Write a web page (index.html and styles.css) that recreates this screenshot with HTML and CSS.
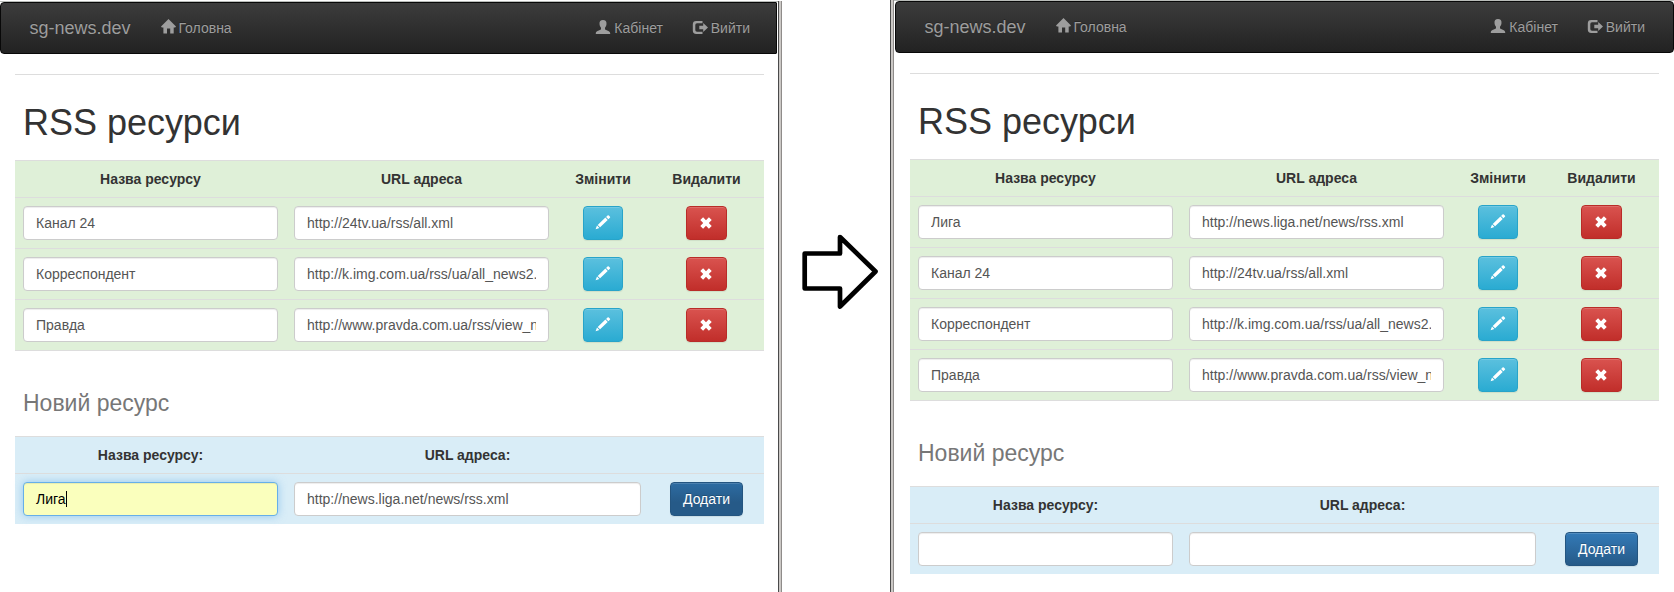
FILE: index.html
```
<!DOCTYPE html>
<html lang="uk">
<head>
<meta charset="utf-8">
<title>RSS ресурси</title>
<link rel="stylesheet" href="styles.css">
</head>
<body>
<svg class="sprite" width="0" height="0">
  <defs>
    <symbol id="home" viewBox="0 0 15 15"><path d="M7.500 0 15 7.600 14.200 8.400H12.700V14.500H9.200V9.400H6V14.500H2.400V8.400H.8L0 7.600Z"/></symbol>
    <symbol id="user" viewBox="0 0 14 14"><path d="M7 0C9.500 0 10.700 1.600 10.500 4 10.400 5.700 9.600 7 9 7.700V9.300C10 10.400 14.200 11 14.200 13.200V14H-.2V13.200C-.2 11 4 10.400 5 9.300V7.700C4.400 7 3.600 5.700 3.500 4 3.300 1.600 4.500 0 7 0Z"/></symbol>
    <symbol id="logout" viewBox="0 0 14 14"><path d="M9.500 1H3.200Q-.2 1 -.2 4.400V10.600Q-.2 14 3.200 14H9.500V11.700H4Q2.300 11.700 2.300 10V5Q2.300 3.300 4 3.300H9.500ZM10.200 3 15 7.500 10.200 12V9.300H6.300V5.700H10.200Z"/></symbol>
    <symbol id="pencil" viewBox="0 0 14 14"><path d="M-.4 14.200 1 10.500 3.400 12.900ZM1.700 9.900 9.400 2.600 11.700 4.900 4.100 12.200ZM10.100 1.900 11.500.5Q12.200-.1 12.800.5L14 1.700Q14.500 2.200 13.900 2.800L12.400 4.200Z"/></symbol>
    <symbol id="remove" viewBox="0 0 12 12"><path d="M3.100.3 6 3.200 8.900.3 11.700 3.100 8.800 6 11.700 8.900 8.900 11.700 6 8.800 3.100 11.700.3 8.900 3.200 6 .3 3.100Z"/></symbol>
  </defs>
</svg>
<main class="stage">
  <section class="window window-before">
    <div class="page">
      <nav class="navbar">
        <span class="brand">sg-news.dev</span>
        <a class="nav-link"><svg class="icon icon-home"><use href="#home"/></svg> Головна</a>
        <span class="spacer"></span>
        <a class="nav-link"><svg class="icon"><use href="#user"/></svg> Кабінет</a>
        <a class="nav-link"><svg class="icon"><use href="#logout"/></svg> Вийти</a>
      </nav>
      <div class="content">
        <h1>RSS ресурси</h1>
        <div class="table resources">
          <div class="row head"><b>Назва ресурсу</b><b>URL адреса</b><b>Змінити</b><b>Видалити</b></div>
          <div class="row"><input value="Канал 24"><input value="http://24tv.ua/rss/all.xml"><button class="btn edit"><svg class="icon"><use href="#pencil"/></svg></button><button class="btn delete"><svg class="icon-x"><use href="#remove"/></svg></button></div>
          <div class="row"><input value="Корреспондент"><input value="http://k.img.com.ua/rss/ua/all_news2.xml"><button class="btn edit"><svg class="icon"><use href="#pencil"/></svg></button><button class="btn delete"><svg class="icon-x"><use href="#remove"/></svg></button></div>
          <div class="row"><input value="Правда"><input value="http://www.pravda.com.ua/rss/view_news/"><button class="btn edit"><svg class="icon"><use href="#pencil"/></svg></button><button class="btn delete"><svg class="icon-x"><use href="#remove"/></svg></button></div>
        </div>
        <h2>Новий ресурс</h2>
        <div class="table create">
          <div class="row head"><b>Назва ресурсу:</b><b>URL адреса:</b></div>
          <div class="row"><div class="field-focused">Лига<i class="caret"></i></div><input value="http://news.liga.net/news/rss.xml"><button class="btn add add-active">Додати</button></div>
        </div>
      </div>
    </div>
    <div class="edge"></div>
  </section>
  <div class="between">
    <svg class="arrow" viewBox="0 0 80 80"><path d="M4.700 21.500H40V5L75.500 39.500 40 74.500V56.500H4.700Z"/></svg>
  </div>
  <section class="window window-after">
    <div class="edge"></div>
    <div class="page">
      <nav class="navbar">
        <span class="brand">sg-news.dev</span>
        <a class="nav-link"><svg class="icon icon-home"><use href="#home"/></svg> Головна</a>
        <span class="spacer"></span>
        <a class="nav-link"><svg class="icon"><use href="#user"/></svg> Кабінет</a>
        <a class="nav-link"><svg class="icon"><use href="#logout"/></svg> Вийти</a>
      </nav>
      <div class="content">
        <h1>RSS ресурси</h1>
        <div class="table resources">
          <div class="row head"><b>Назва ресурсу</b><b>URL адреса</b><b>Змінити</b><b>Видалити</b></div>
          <div class="row"><input value="Лига"><input value="http://news.liga.net/news/rss.xml"><button class="btn edit"><svg class="icon"><use href="#pencil"/></svg></button><button class="btn delete"><svg class="icon-x"><use href="#remove"/></svg></button></div>
          <div class="row"><input value="Канал 24"><input value="http://24tv.ua/rss/all.xml"><button class="btn edit"><svg class="icon"><use href="#pencil"/></svg></button><button class="btn delete"><svg class="icon-x"><use href="#remove"/></svg></button></div>
          <div class="row"><input value="Корреспондент"><input value="http://k.img.com.ua/rss/ua/all_news2.xml"><button class="btn edit"><svg class="icon"><use href="#pencil"/></svg></button><button class="btn delete"><svg class="icon-x"><use href="#remove"/></svg></button></div>
          <div class="row"><input value="Правда"><input value="http://www.pravda.com.ua/rss/view_news/"><button class="btn edit"><svg class="icon"><use href="#pencil"/></svg></button><button class="btn delete"><svg class="icon-x"><use href="#remove"/></svg></button></div>
        </div>
        <h2>Новий ресурс</h2>
        <div class="table create">
          <div class="row head"><b>Назва ресурсу:</b><b>URL адреса:</b></div>
          <div class="row"><input><input><button class="btn add">Додати</button></div>
        </div>
      </div>
    </div>
  </section>
</main>
</body>
</html>
```
FILE: styles.css
```
* { box-sizing: border-box; }
body {
  margin: 0;
  background: #fff;
  color: #333;
  font: 14px/20px "Liberation Sans", Arial, sans-serif;
  overflow: hidden;
}
.sprite { display: block; height: 0; }
.stage {
  display: grid;
  grid-template-columns: 782px 108px 784px;
  height: 592px;
  overflow: hidden;
}
.window { display: flex; height: 592px; overflow: hidden; }
.window-before { padding-top: 1px; }
.page { flex: 1; min-width: 0; border-top: 1px solid #b9bcb9; overflow: hidden; }
.window-after .page { padding-left: 1px; }
.edge {
  flex: none;
  width: 4px;
  background: linear-gradient(90deg, #4a4a4a 1px, #cbc8c5 1px 3px, #8f8c8a 3px);
}
.navbar {
  display: flex;
  align-items: center;
  width: 779px;
  height: 52px;
  padding: 0 13px 0 13.5px;
  border: 1px solid #080808;
  border-radius: 4px;
  background: linear-gradient(#3c3c3c, #222);
  color: #9d9d9d;
  text-shadow: 0 -1px 0 rgba(0, 0, 0, .25);
}
.window-before .navbar { width: 777px; padding-right: 11px; border-radius: 4px 1px 1px 4px; }
.brand { padding: 0 15px; font-size: 18px; }
.nav-link { padding: 0 15px; white-space: nowrap; }
.spacer { flex: 1; }
.icon { width: 14px; height: 14px; vertical-align: -1px; fill: currentColor; overflow: visible; }
.icon use { overflow: visible; }
.icon symbol, symbol { overflow: visible; }
.icon-home { width: 15px; height: 15px; margin-right: -1px; }
.icon-x { width: 12px; height: 12px; margin: 0 1px 1px 0; fill: currentColor; }
.edit .icon { margin-bottom: 2px; }
.content {
  width: 749px;
  margin: 20px 0 0 15px;
  border-top: 1px solid #ddd;
}
h1 { margin: 28px 8px 18px; font-size: 36px; font-weight: 400; line-height: 39px; }
h2 { margin: 39px 8px 20px; font-size: 23px; font-weight: 400; line-height: 26px; color: #777; }
.row {
  display: grid;
  grid-template-columns: 271px 271px 92px 115px;
  align-items: center;
  justify-items: center;
  height: 51px;
  border-top: 1px solid #ddd;
}
.create .row { grid-template-columns: 271px 363px 115px; }
.row.head { height: 37px; }
.resources { background: #dff0d8; border-bottom: 1px solid #ddd; }
.create { background: #d9edf7; }
input, .field-focused {
  display: block;
  width: calc(100% - 16px);
  height: 34px;
  padding: 6px 12px;
  border: 1px solid #ccc;
  border-radius: 4px;
  background: #fff;
  box-shadow: inset 0 1px 1px rgba(0, 0, 0, .075);
  color: #555;
  font: inherit;
}
.field-focused {
  display: flex;
  align-items: center;
  border-color: #66afe9;
  background: #faffbd;
  box-shadow: inset 0 1px 1px rgba(0, 0, 0, .075), 0 0 8px rgba(102, 175, 233, .6);
  color: #000;
}
.caret { width: 1px; height: 16px; background: #000; }
.btn {
  display: flex;
  align-items: center;
  justify-content: center;
  height: 34px;
  padding: 0;
  border: 1px solid;
  border-radius: 4px;
  box-shadow: inset 0 1px 0 rgba(255, 255, 255, .15), 0 1px 1px rgba(0, 0, 0, .075);
  color: #fff;
  font: inherit;
  text-shadow: 0 -1px 0 rgba(0, 0, 0, .2);
}
.edit { width: 40px; border-color: #28a4c9; background: linear-gradient(#5bc0de, #2aabd2); }
.delete { width: 41px; border-color: #b92c28; background: linear-gradient(#d9534f, #c12e2a); }
.add { width: 73px; border-color: #245580; background: linear-gradient(#337ab7, #265a88); }
.add-active { background: linear-gradient(#2d6ca2, #265a88 60%); }
.between { padding: 232px 0 0 18px; }
.arrow { display: block; width: 80px; height: 80px; }
.arrow path { fill: #fff; stroke: #000; stroke-width: 4.700; stroke-linejoin: round; }
```
